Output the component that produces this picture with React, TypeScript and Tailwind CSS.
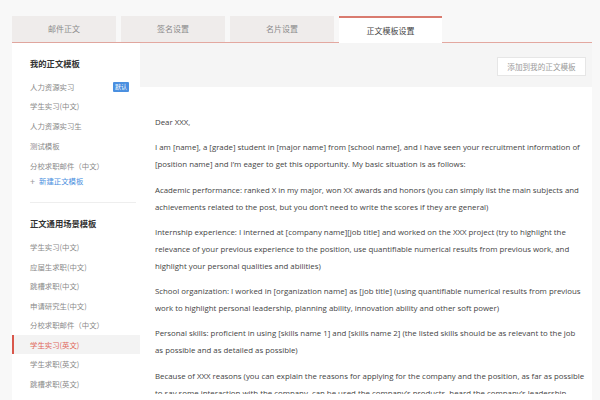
import React from 'react'

const tabs = ['邮件正文', '签名设置', '名片设置']

const myTemplates = ['学生实习(中文)', '人力资源实习生', '测试模板', '分校求职邮件（中文）']

const sceneTemplates = [
  '学生实习(中文)',
  '应届生求职(中文)',
  '跳槽求职(中文)',
  '申请研究生(中文)',
  '分校求职邮件（中文）',
  '学生实习(英文)',
  '学生求职(英文)',
  '跳槽求职(英文)',
]

const paragraphs = [
  'I am [name], a [grade] student in [major name] from [school name], and I have seen your recruitment information of [position name] and I’m eager to get this opportunity. My basic situation is as follows:',
  'Academic performance: ranked X in my major,  won XX awards and honors (you can simply list the main subjects and achievements related to the post, but you don’t need to write the scores if they are general)',
  'Internship experience: I interned at [company name][job title] and worked on the XXX project (try to highlight the relevance of your previous experience to the position, use quantifiable numerical results from previous work, and highlight your personal qualities and abilities)',
  'School organization: I worked in [organization name] as [job title] (using quantifiable numerical results from previous work to highlight personal leadership, planning ability, innovation ability and other soft power)',
  'Personal skills: proficient in using [skills name 1] and [skills name 2] (the listed skills should be as relevant to the job as possible and as detailed as possible)',
  'Because of XXX reasons (you can explain the reasons for applying for the company and the position, as far as possible to say some interaction with the company, can be used the company’s products, heard the company’s leadership speech)',
]

export default function App() {
  return (
    <div className="w-[600px] h-[400px] overflow-hidden bg-[#f8f8f8] pt-[16px] pl-[12px] pr-[8px] font-['Noto_Sans_CJK_SC',sans-serif]">
      {/* tabs */}
      <div className="flex gap-[5px] h-[27px] border-b-[1.5px] border-[#e3a8a0]">
        {tabs.map((t) => (
          <div
            key={t}
            className="w-[104px] bg-[#efeceb] flex items-center justify-center text-[8px] text-[#8a8a8a]"
          >
            {t}
          </div>
        ))}
        <div className="w-[103px] -mb-[1.5px] h-[28.5px] bg-white border-t-2 border-[#d97b6f] flex items-center justify-center text-[8px] text-[#444]">
          正文模板设置
        </div>
      </div>

      <div className="flex h-[360px]">
        {/* sidebar */}
        <div className="w-[128px] bg-white pt-[10px] shadow-[1px_0_2px_rgba(0,0,0,0.04)]">
          <div className="h-[20px] pl-[18px] flex items-center text-[8.3px] font-bold text-[#333]">我的正文模板</div>
          <div className="mt-[5px] h-[18px] pl-[18px] pr-[11px] flex items-center justify-between text-[7.4px] text-[#8a8a8a]">
            <span>人力资源实习</span>
            <span className="bg-[#4a8fe0] text-white text-[6px] leading-none px-[2px] py-[2px] rounded-[1px]">默认</span>
          </div>
          {myTemplates.map((t) => (
            <div key={t} className="h-[20px] pl-[18px] flex items-center text-[7.4px] text-[#8a8a8a]">
              {t}
            </div>
          ))}
          <div className="h-[10px] pl-[18px] flex items-center gap-[4px] text-[7.4px] text-[#4a8fe0]">
            <span className="text-[#999] text-[9px] leading-none">+</span>
            <span>新建正文模板</span>
          </div>
          <div className="mt-[16px] ml-[18px] mr-[4px] border-t border-[#eeeeee]" />
          <div className="mt-[10px] h-[20px] pl-[18px] flex items-center text-[8.3px] font-bold text-[#333]">正文通用场景模板</div>
          <div className="mt-[4px]">
            {sceneTemplates.map((t, i) =>
              i === 5 ? (
                <div
                  key={t + i}
                  className="h-[19.5px] pl-[16px] flex items-center text-[7.4px] text-[#e0675a] bg-[#f3f3f3] border-l-2 border-[#d9574b]"
                >
                  {t}
                </div>
              ) : (
                <div key={t + i} className="h-[19.5px] pl-[18px] flex items-center text-[7.4px] text-[#8a8a8a]">
                  {t}
                </div>
              )
            )}
          </div>
        </div>

        {/* content */}
        <div className="flex-1 bg-white">
          <div className="h-[44px] bg-[#f5f5f5] flex items-center justify-end pr-[6px]">
            <div className="w-[89px] h-[19px] mt-[3px] bg-white border border-[#e6e6e6] flex items-center justify-center text-[7.6px] text-[#9a9a9a]">
              添加到我的正文模板
            </div>
          </div>
          <div className="h-[307px] overflow-hidden pt-[27px] pl-[15px] w-[445px] font-['Open_Sans',sans-serif] text-[7.85px] text-[#444] leading-[17px]">
            <p className="mb-[8.3px]">Dear XXX,</p>
            {paragraphs.map((p) => (
              <p key={p.slice(0, 12)} className="mb-[8.3px]">
                {p}
              </p>
            ))}
          </div>
        </div>
      </div>
    </div>
  )
}
